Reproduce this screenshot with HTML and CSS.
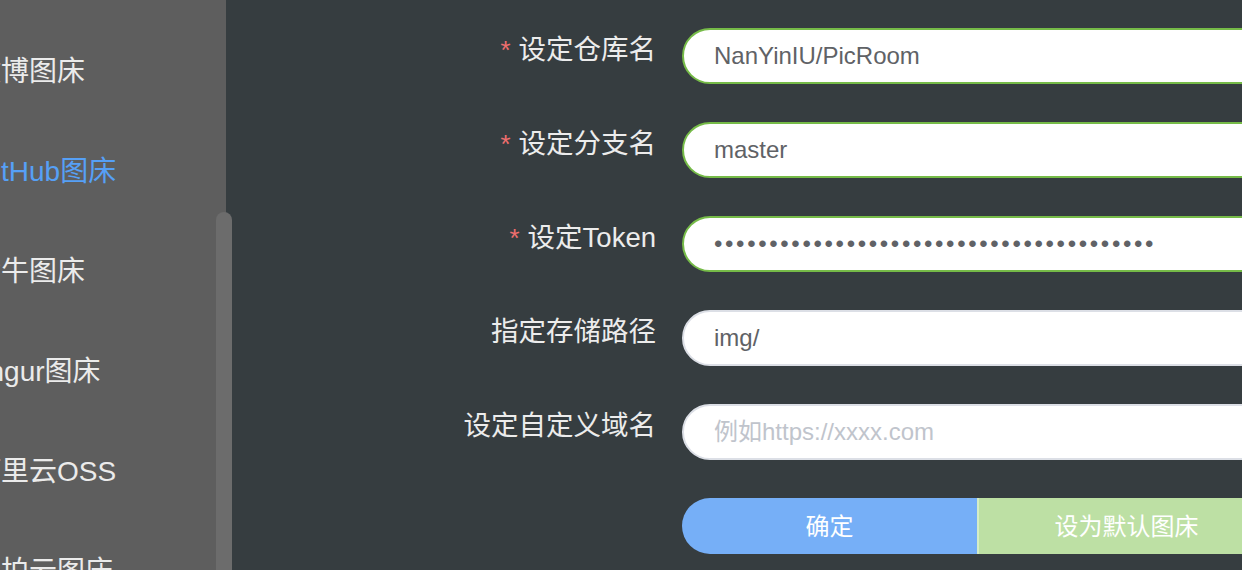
FILE: index.html
```html
<!DOCTYPE html>
<html lang="zh-CN">
<head>
<meta charset="utf-8">
<title>GitHub图床设置</title>
<link rel="stylesheet" href="styles.css">
</head>
<body>
<div class="app">
  <aside class="sidebar">
    <ul class="menu">
      <li class="menu-item">微博图床</li>
      <li class="menu-item active">GitHub图床</li>
      <li class="menu-item">七牛图床</li>
      <li class="menu-item">Imgur图床</li>
      <li class="menu-item">阿里云OSS</li>
      <li class="menu-item">又拍云图床</li>
    </ul>
    <div class="scroll-thumb"></div>
  </aside>
  <main class="main">
    <form class="form">
      <label class="label required">设定仓库名</label>
      <input class="input success" type="text" value="NanYinIU/PicRoom">
      <label class="label required">设定分支名</label>
      <input class="input success" type="text" value="master">
      <label class="label required">设定Token</label>
      <input class="input success password" type="password" value="aaaaaaaaaaaaaaaaaaaaaaaaaaaaaaaaaaaaaaaa">
      <label class="label">指定存储路径</label>
      <input class="input" type="text" value="img/">
      <label class="label">设定自定义域名</label>
      <input class="input" type="text" placeholder="例如https://xxxx.com">
      <span class="label"></span>
      <div class="btn-group">
        <button type="button" class="btn btn-primary">确定</button>
        <button type="button" class="btn btn-success">设为默认图床</button>
      </div>
    </form>
  </main>
</div>
</body>
</html>
```
FILE: styles.css
```css
* { box-sizing: border-box; }
html, body {
  margin: 0;
  padding: 0;
  height: 100%;
  overflow: hidden;
}
body {
  font-family: "Liberation Sans", "Noto Sans CJK SC", sans-serif;
  background: #363d40;
}
.app {
  display: flex;
  width: 1242px;
  height: 570px;
  overflow: hidden;
}
.sidebar {
  position: relative;
  width: 226px;
  flex: 0 0 226px;
  background: #5e5e5e;
  overflow: visible;
  z-index: 1;
}
.menu {
  list-style: none;
  margin: 22px 0 0 0;
  padding: 0;
  overflow: hidden;
  height: 548px;
}
.menu-item {
  height: 100px;
  line-height: 100px;
  font-size: 28px;
  color: #ebebeb;
  margin-left: -27px;
  white-space: nowrap;
}
.menu-item.active {
  color: #56a0f6;
}
.scroll-thumb {
  position: absolute;
  left: 216px;
  top: 212px;
  width: 16px;
  height: 400px;
  border-radius: 8px;
  background: #6c6c6c;
}
.main {
  flex: 1;
  min-width: 0;
  overflow: hidden;
  padding-top: 28px;
}
.form {
  display: grid;
  grid-template-columns: 240px 592px;
  grid-auto-rows: 56px;
  row-gap: 38px;
  margin-left: 216px;
}
.label {
  padding-right: 26px;
  padding-top: 2px;
  text-align: right;
  line-height: 40px;
  font-size: 27.5px;
  color: #ececec;
  white-space: nowrap;
}
.label.required::before {
  content: "*";
  color: #ef6e6e;
  margin-right: 8px;
  font-family: "Liberation Sans", sans-serif;
  font-size: 26px;
}
.input {
  width: 592px;
  height: 56px;
  border: 2px solid #dcdfe6;
  border-radius: 28px;
  background: #ffffff;
  padding: 0 0 0 30px;
  font-family: "Liberation Sans", "Noto Sans CJK SC", sans-serif;
  font-size: 24px;
  color: #606266;
  outline: none;
}
.input.success {
  border-color: #76bb48;
}
.input.password {
  letter-spacing: 2.65px;
}
.input::placeholder {
  color: #c0c4cc;
}
.btn-group {
  display: flex;
  width: 592px;
  height: 56px;
}
.btn {
  flex: 1;
  height: 56px;
  border: none;
  margin: 0;
  padding: 0 0 3px 0;
  font-family: "Liberation Sans", "Noto Sans CJK SC", sans-serif;
  font-size: 24px;
  color: #ffffff;
  cursor: pointer;
}
.btn-primary {
  background: #76aff7;
  border-radius: 28px 0 0 28px;
}
.btn-success {
  background: #bde0a4;
  border-left: 2px solid #d6edc6;
}
```
